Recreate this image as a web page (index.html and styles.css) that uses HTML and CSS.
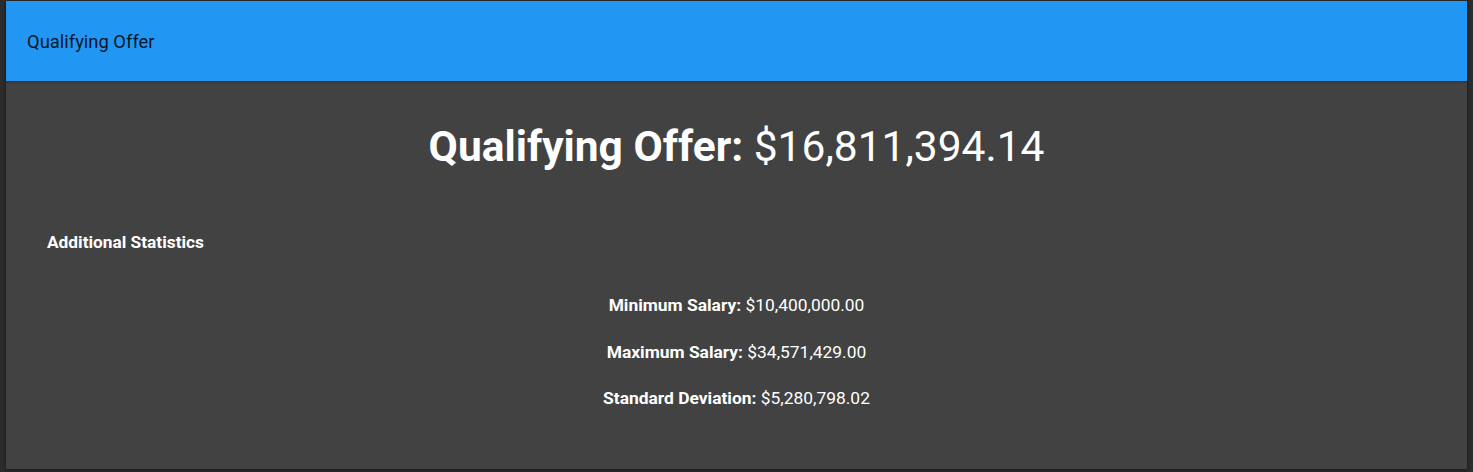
FILE: index.html
```html
<!DOCTYPE html>
<html>
<head>
<meta charset="utf-8">
<link rel="stylesheet" href="styles.css">
</head>
<body>
<div class="card">
  <header class="bar">Qualifying Offer</header>
  <main class="content">
    <h1 class="offer"><strong>Qualifying Offer:</strong> $16,811,394.14</h1>
    <h3 class="section">Additional Statistics</h3>
    <div class="stats">
      <p class="stat"><strong>Minimum Salary:</strong> $10,400,000.00</p>
      <p class="stat"><strong>Maximum Salary:</strong> $34,571,429.00</p>
      <p class="stat"><strong>Standard Deviation:</strong> $5,280,798.02</p>
    </div>
  </main>
</div>
</body>
</html>
```
FILE: styles.css
```css
html, body {
  margin: 0;
  padding: 0;
  background: #2c2c2c;
  font-family: Roboto, "Noto Sans", sans-serif;
}
body {
  padding: 1px 6px 2px 6px;
  height: 472px;
  box-sizing: border-box;
}
.card {
  background: #424242;
  height: 468px;
  box-shadow: 0 1px 3px rgba(0,0,0,0.5);
  display: flex;
  flex-direction: column;
}
.bar {
  background: #2196f3;
  height: 80px;
  display: flex;
  align-items: center;
  padding-left: 21px;
  font-size: 18.4px;
  color: rgba(0,0,0,0.87);
  box-shadow: 0 1px 2px rgba(0,0,0,0.35);
}
.content {
  color: #fff;
  padding: 0 41px;
}
.offer {
  margin: 30px 0 0;
  text-align: center;
  font-size: 42.5px;
  font-weight: 400;
  line-height: 72px;
}
.offer strong { font-weight: 700; }
.section {
  margin: 49px 0 0;
  font-size: 17.3px;
  font-weight: 700;
  line-height: 20px;
}
.stats {
  margin-top: 43px;
  display: flex;
  flex-direction: column;
  gap: 26.5px;
}
.stat {
  margin: 0;
  text-align: center;
  font-size: 17.4px;
  line-height: 20px;
}
.stat strong { font-weight: 700; }
```
